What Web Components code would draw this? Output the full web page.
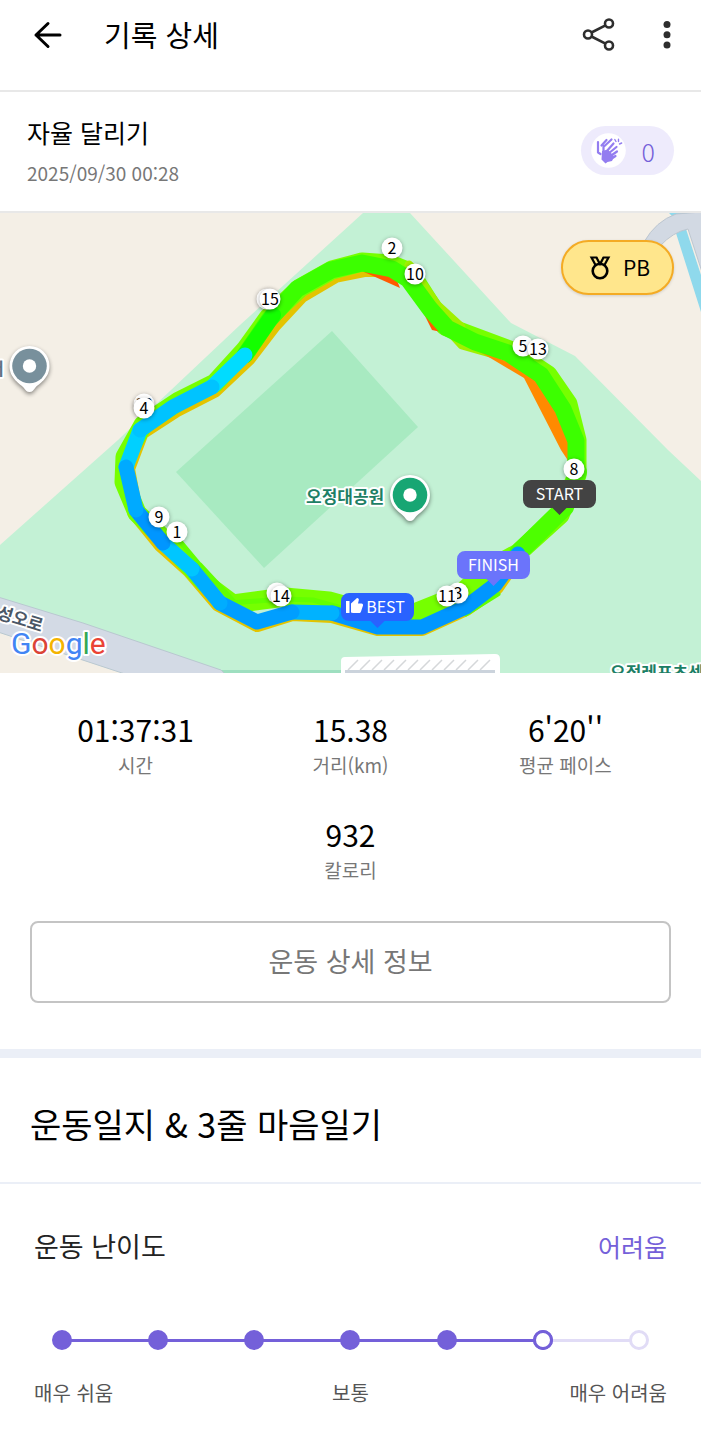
<!DOCTYPE html>
<html lang="ko">
<head>
<meta charset="UTF-8">
<meta name="viewport" content="width=device-width, initial-scale=1">
<title>기록 상세</title>
<style>
    :root {
        --purple: #7460d9;
        --purple-light: #e1dcf6;
        --purple-bg: #eeebfc;
        --gray: #777;
        --line: #e8e8e8;
        --band: #ebeff7;
    }
    body { margin:0; background:#fff; color:#000; font-family:"Noto Sans CJK KR", "Noto Sans", sans-serif; }
</style>
</head>
<body>
<app-header>기록 상세</app-header>
<main>
    <record-summary count="0">
        자율 달리기
        <time slot="date" datetime="2025-09-30T00:28">2025/09/30 00:28</time>
    </record-summary>
    <route-map></route-map>
    <stat-list>
        <stat-item value="01:37:31">시간</stat-item>
        <stat-item value="15.38">거리(km)</stat-item>
        <stat-item value="6'20''">평균 페이스</stat-item>
        <stat-item value="932">칼로리</stat-item>
    </stat-list>
    <outline-button>운동 상세 정보</outline-button>
    <section-title>운동일지 &amp; 3줄 마음일기</section-title>
    <level-slider level="6" steps="7" result="어려움">
        운동 난이도
        <span slot="low">매우 쉬움</span>
        <span slot="mid">보통</span>
        <span slot="high">매우 어려움</span>
    </level-slider>
</main>

<script>
// ===== HEADER =====
customElements.define('app-header', class extends HTMLElement {
    connectedCallback() {
        this.attachShadow({ mode: 'open' });
        this.shadowRoot.innerHTML = `
            <style>
                :host { display:block; border-bottom:2px solid var(--line); }
                header { display:flex; align-items:center; padding:14px 24px 36px 32px; }
                h1 { flex:1; margin:0 0 0 40px; font-size:29px; font-weight:400; line-height:40px; }
                button { display:flex; padding:0; border:0; background:none; cursor:pointer; }
                svg { display:block; fill:none; stroke:#2e2e2e; }
                .more { margin-left:40px; }
            </style>
            <header>
                <button aria-label="뒤로">
                    <svg width="32" height="40" viewBox="0 0 32 40" style="stroke:#000" stroke-width="3" stroke-linecap="round" stroke-linejoin="round"><path d="M28 21H4M16 9.500L4 21l12 11.500"/></svg>
                </button>
                <h1><slot></slot></h1>
                <button aria-label="공유">
                    <svg width="36" height="40" viewBox="0 0 36 40" stroke-width="2.600"><circle cx="7" cy="20.500" r="4"/><circle cx="28" cy="9.500" r="4"/><circle cx="28" cy="31.500" r="4"/><path d="M10.500 18.500l14-7.200M10.500 22.500l14 7.200"/></svg>
                </button>
                <button class="more" aria-label="더보기">
                    <svg width="20" height="40" viewBox="0 0 20 40" style="stroke:none;fill:#2e2e2e"><circle cx="10" cy="10.500" r="3.500"/><circle cx="10" cy="20.700" r="3.500"/><circle cx="10" cy="31" r="3.500"/></svg>
                </button>
            </header>
        `;
    }
});

// ===== RECORD SUMMARY =====
customElements.define('record-summary', class extends HTMLElement {
    connectedCallback() {
        this.attachShadow({ mode: 'open' });
        this.shadowRoot.innerHTML = `
            <style>
                :host { display:flex; align-items:center; justify-content:space-between; padding:22px 27px 24px; border-bottom:2px solid var(--line); }
                h2 { margin:0 0 9px; font-size:25px; font-weight:400; line-height:36px; }
                .date { color:var(--gray); font-size:19px; line-height:28px; }
                button {
                    display:flex; align-items:center; gap:16px;
                    height:49px; padding:0 19px 0 10px;
                    border:0; border-radius:25px;
                    background:var(--purple-bg); color:var(--purple);
                    font:300 25px/36px "Noto Sans CJK KR", sans-serif;
                }
            </style>
            <div>
                <h2><slot></slot></h2>
                <div class="date"><slot name="date"></slot></div>
            </div>
            <button aria-label="응원 ${this.getAttribute('count')}">
                <svg width="35" height="35" viewBox="0 0 35 35">
                    <circle cx="17.500" cy="17.500" r="17.300" fill="#fff"/>
                    <g fill="none" stroke="#937df0" stroke-width="2.200" stroke-linecap="round">
                        <path d="M7 19.500V9M10.500 12.500l5-5.500M13.500 13L20.500 6.500M7 19.500l2.500 1.500"/>
                        <path d="M12.500 20V12.500M15 19l7.500-8.500M17.500 20.500l8-6.500M19.500 23l6.500-4.500M20 26l4.500-3"/>
                        <path d="M25 8.500L23.800 6.500M27.500 8.500V6.300M28.500 11l2.200-1" stroke-width="1.400"/>
                    </g>
                    <path fill="#937df0" d="M11 18l6-1.500 6 7-2 4.500-4.500 1-2 1.500-4-4z"/>
                </svg>
                <span>${this.getAttribute('count')}</span>
            </button>
        `;
    }
});

// ===== MAP =====
const marker = (x, y, n) => `<g class="km"><circle cx="${x}" cy="${y}" r="10.500"/>${n ? `<text x="${x}" y="${y + 6}">${n}</text>` : ''}</g>`;

const flag = (x, y, color, text, icon = '') => `
    <g class="flag">
        <path fill="${color}" d="M${x - 28.5} ${y}h57a8 8 0 0 1 8 8v12a8 8 0 0 1-8 8H${x + 7}l-7 7-7-7H${x - 28.5}a8 8 0 0 1-8-8v-12a8 8 0 0 1 8-8z"/>
        ${icon}<text x="${icon ? x + 8 : x}" y="${y + 20}">${text}</text>
    </g>`;

const pin = (x, y, color) => `
    <g>
        <path class="pin" d="M${x} ${y + 26}c-3 0-4-2-6-4.500-3-3.500-14-9-14-21.500a20 20 0 0 1 40 0c0 12.500-11 18-14 21.500-2 2.500-3 4.500-6 4.500z"/>
        <circle cx="${x}" cy="${y}" r="17.300" fill="${color}"/><circle cx="${x}" cy="${y}" r="6.700" fill="#fff"/>
    </g>`;

customElements.define('route-map', class extends HTMLElement {
    connectedCallback() {
        this.attachShadow({ mode: 'open' });
        this.shadowRoot.innerHTML = `
            <style>
                :host { display:block; position:relative; }
                svg { display:block; }
                .map { width:100%; height:auto; }
                .route { fill:none; stroke-linejoin:round; stroke-linecap:round; }
                .km circle { fill:#fff; filter:drop-shadow(0 1px 2px rgba(0,0,0,.35)); }
                .km text { font-size:16px; text-anchor:middle; }
                .flag text { font-size:16px; text-anchor:middle; fill:#fff; }
                .pin { fill:#fff; filter:drop-shadow(0 2px 2px rgba(0,0,0,.45)); }
                .place { font-size:17px; font-weight:700; fill:#1d7f65; stroke:#fff; stroke-width:4px; stroke-linejoin:round; paint-order:stroke; }
                .logo { font-family:Roboto, sans-serif; font-size:30px; stroke:#fff; stroke-width:4px; stroke-linejoin:round; paint-order:stroke; }
                .badge {
                    position:absolute; top:27px; right:27px;
                    display:flex; align-items:center; gap:9px;
                    box-sizing:border-box; height:55px; padding:0 22px 2px 23px;
                    border:2px solid #f4ab24; border-radius:28px;
                    background:#ffe68c; font-size:21px; line-height:30px;
                    box-shadow:0 1px 3px rgba(0,0,0,.15);
                }
            </style>
            <svg class="map" viewBox="0 213 701 460" role="img" aria-label="달리기 경로">
                <rect y="213" width="701" height="460" fill="#f4efe6"/>
                <path fill="#c3f1d5" d="M363 213h47l101 110 64 33 93 94 33 31v192H220L0 600v-55l118-105 122-115z"/>
                <path fill="#a8eac1" d="M332 331l86 96-154 141-88-96z"/>
                <path fill="#9edfc0" d="M205 670h136v3H205z"/>
                <path fill="#d3dae5" stroke="#b9c8d0" d="M-2 597l85 26 138 47 4 4H125L-2 632z"/>
                <path fill="#fff" d="M341 673v-12q0-4 4-4l150-3q5 0 5 5v14z"/>
                <path stroke="#d5d8da" stroke-width="1.500" d="M348 670l10-10m2 10l10-10m2 10l10-10m2 10l10-10m2 10l10-10m2 10l10-10m2 10l10-10m2 10l10-10m2 10l10-10m2 10l10-10m2 10l10-10m2 10l10-10"/>
                <path fill="#cbd3dc" d="M345 670h150v3H345z"/>
                <path fill="#8fd9ec" d="M669 213h22l-16 6zM675 230l11-1 15 46v37z"/>
                <path fill="#d2d9e3" stroke="#bcc6d0" d="M644 242q12-21 32-28l26-2v60l-14-43q-15 3-28 17z"/>

                <g class="route">
                    <path stroke="#e3c400" stroke-width="16" d="M518 555l-22 32-30 21-44 20h-44l-46-13-40-2-35 11-38-20-29-34-29-26-26-32-8-43 14-37 34-22 39-20 34-32 26-34 27-29 34-20 30-6h30"/>
                    <path stroke="#76ff00" stroke-width="19" d="M518 553l42-38 17-40v-35l-9-36-20-29-36-24-67-25-16-24-19-30-20-8-28-2-30 8-32 18-32 30-23 32-30 33-36 18-36 24-18 32-1 25 13 31 32 31 36 39 28 21 52-7 44 4 50 14h30l50-20 28-25z"/>
                    <path stroke="#a0f000" stroke-width="9" d="M432 312l30 33 60 17M409 265l28 40 24 22"/>
                    <path fill="#ff8a00" d="M440 328l84 50 37 72 8 12 2-22-28-58-28-20z"/>
                    <path fill="#ffe600" d="M470 346l40 17 18 8-14-12z"/>
                    <path fill="#c3f1d5" d="M541 384l29 45-1 8z"/>
                    <path fill="#ff5a00" d="M364 272l36 16-4-10-18-8zM414 294l18 36 9 2-14-30z"/>
                    <path stroke="#3cff00" stroke-width="17" d="M245 355l24-35 28-31 34-19 31-7 30 6 16 10 22 30 17 19 28 14 33 11 33 22 22 34 13 32 0 31"/>
                    <path stroke="#14ff00" stroke-width="16" d="M245 355l28-40"/>
                    <path stroke="#4dff00" stroke-width="18" d="M578 472l-13 35-47 46"/>
                    <path stroke="#62ff00" stroke-width="5" d="M498 594l-32 20M230 603l55-4 28 1 32 9M200 565l36 39M178 539l30 36"/>
                    <g stroke-width="15">
                        <path stroke="#0096ff" d="M518 554l-23 31-29 22-44 20h-44l-46-14"/>
                        <path stroke="#00b2ff" d="M332 613l-40-1"/>
                        <path stroke="#009eff" d="M292 612l-35 10-37-19"/>
                        <path stroke="#00adff" d="M220 603l-28-34"/>
                        <path stroke="#00c6ff" d="M192 569l-29-26"/>
                        <path stroke="#0096ff" d="M163 543l-27-33"/>
                        <path stroke="#00d0ff" d="M126 467l14-37"/>
                        <path stroke="#00aaff" d="M136 510l-10-43"/>
                        <path stroke="#00dcff" d="M212 387l33-32"/>
                        <path stroke="#00c3ff" d="M140 430l33-23 39-20"/>
                    </g>
                </g>

                <text class="place" x="306" y="503">오정대공원</text>
                <text class="place" x="610" y="679">오정레포츠센터</text>
                <text class="place" x="4" y="375" text-anchor="end" style="fill:#5f7583">터</text>
                <text class="place" transform="translate(-4 618) rotate(17)" style="fill:#4b5766">성오로</text>
                <text class="logo" x="11" y="654"><tspan fill="#4285f4">G</tspan><tspan fill="#db4437">o</tspan><tspan fill="#f4b400">o</tspan><tspan fill="#4285f4">g</tspan><tspan fill="#34a853">l</tspan><tspan fill="#ea4335">e</tspan></text>
                ${pin(410, 495, '#17a673')}
                ${pin(29.5, 366, '#78909c')}

                ${marker(392, 248, 2)}
                ${marker(415, 274, 10)}
                ${marker(267, 299)}
                ${marker(270, 299, 15)}
                ${marker(523, 346, 5)}
                ${marker(538, 349, 13)}
                ${marker(574, 469, 8)}
                ${marker(144, 404, 12)}
                ${marker(144, 408, 4)}
                ${marker(159, 517, 9)}
                ${marker(177, 532, 1)}
                ${marker(277, 593)}
                ${marker(281, 596, 14)}
                ${marker(458, 593, 3)}
                ${marker(447, 596, 11)}
                ${flag(559.5, 480, '#434343', 'START')}
                ${flag(493.5, 551, '#6b74fb', 'FINISH')}
                ${flag(377.5, 593, '#2962ff', 'BEST', '<path fill="#fff" d="M346 601h3.500v12H346zM351 612.500v-9l6-5.500c1.500 0 2 1 1.800 2l-.8 3.500h3.500c1.200 0 1.800 1 1.500 2l-2 6c-.4 1-1 1.500-2 1.500h-6z"/>')}
            </svg>
            <div class="badge">
                <svg width="28" height="28" viewBox="0 0 28 28" fill="none" stroke="#000" stroke-width="2.600"><circle cx="14" cy="18" r="7.300"/><path d="M9.500 12L5.500 4.500h5L14 11l3.500-6.500h5L18.500 12M10.500 4.500l3 6M17.500 4.500l-3 6" stroke-width="2.200"/></svg>
                <span>PB</span>
            </div>
        `;
    }
});

// ===== STATS =====
customElements.define('stat-list', class extends HTMLElement {
    connectedCallback() {
        this.attachShadow({ mode: 'open' });
        this.shadowRoot.innerHTML = `
            <style>
                :host { display:flex; flex-wrap:wrap; justify-content:center; row-gap:35px; padding:36px 28px 37px; }
                ::slotted(stat-item) { flex:0 0 33.33%; }
            </style>
            <slot></slot>
        `;
    }
});

customElements.define('stat-item', class extends HTMLElement {
    connectedCallback() {
        this.attachShadow({ mode: 'open' });
        this.shadowRoot.innerHTML = `
            <style>
                :host { display:flex; flex-direction:column; align-items:center; gap:2px; }
                .value { font-size:30px; line-height:40px; }
                .label { color:var(--gray); font-size:19px; line-height:28px; }
            </style>
            <span class="value">${this.getAttribute('value')}</span>
            <span class="label"><slot></slot></span>
        `;
    }
});

// ===== DETAIL BUTTON =====
customElements.define('outline-button', class extends HTMLElement {
    connectedCallback() {
        this.attachShadow({ mode: 'open' });
        this.shadowRoot.innerHTML = `
            <style>
                :host { display:block; padding:0 30px 46px; border-bottom:9px solid var(--band); }
                button {
                    width:100%; padding:18px 0 20px;
                    border:2px solid #c4c4c4; border-radius:8px;
                    background:#fff; color:var(--gray);
                    font:400 27px/40px "Noto Sans CJK KR", sans-serif;
                }
            </style>
            <button><slot></slot></button>
        `;
    }
});

// ===== SECTION TITLE =====
customElements.define('section-title', class extends HTMLElement {
    connectedCallback() {
        this.attachShadow({ mode: 'open' });
        this.shadowRoot.innerHTML = `
            <style>
                :host { display:block; padding:42px 30px 34px; border-bottom:2px solid var(--band); }
                h2 { margin:0; font-size:34px; font-weight:400; line-height:48px; }
            </style>
            <h2><slot></slot></h2>
        `;
    }
});

// ===== DIFFICULTY =====
customElements.define('level-slider', class extends HTMLElement {
    connectedCallback() {
        const level = Number(this.getAttribute('level'));
        const steps = Number(this.getAttribute('steps'));
        const dots = Array.from({ length: steps }, (_, i) => `<i class="${i < level ? 'on' : ''}"></i>`).join('');
        this.attachShadow({ mode: 'open' });
        this.shadowRoot.innerHTML = `
            <style>
                :host { display:block; padding:42px 34px 32px; }
                .head { display:flex; justify-content:space-between; line-height:40px; }
                label { color:#222; font-size:27px; }
                output { color:var(--purple); font-size:25px; }
                .slider { display:grid; align-items:center; margin:64px 18px 27px; }
                .slider > * { grid-area:1 / 1; }
                .line { height:3px; margin:0 10px; background:linear-gradient(to right, var(--purple) ${(level - 1) / (steps - 1) * 100}%, var(--purple-light) 0); }
                .dots { display:flex; justify-content:space-between; }
                i { box-sizing:border-box; width:20px; height:20px; border:3px solid var(--purple-light); border-radius:50%; background:#fff; }
                i.on { border-color:var(--purple); background:var(--purple); }
                input { appearance:none; width:100%; height:20px; margin:0; background:none; }
                input::-webkit-slider-thumb { appearance:none; box-sizing:border-box; width:20px; height:20px; border:3px solid var(--purple); border-radius:50%; background:#fff; }
                .scale { display:grid; grid-template-columns:1fr auto 1fr; color:#555; font-size:20px; line-height:32px; }
                .scale slot:last-child { display:block; text-align:right; }
            </style>
            <div class="head">
                <label for="level"><slot></slot></label>
                <output for="level">${this.getAttribute('result')}</output>
            </div>
            <div class="slider">
                <div class="line"></div>
                <div class="dots">${dots}</div>
                <input id="level" type="range" min="1" max="${steps}" value="${level}">
            </div>
            <div class="scale">
                <slot name="low"></slot>
                <slot name="mid"></slot>
                <slot name="high"></slot>
            </div>
        `;
    }
});
</script>
</body>
</html>
